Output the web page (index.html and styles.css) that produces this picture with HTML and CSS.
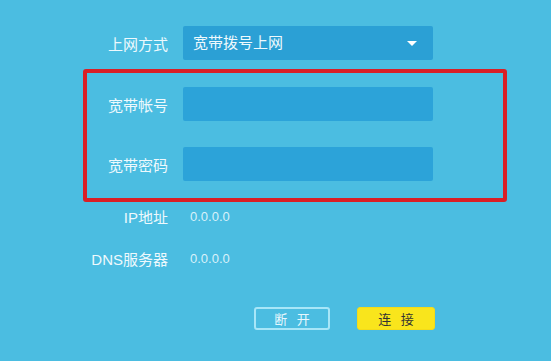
FILE: index.html
```html
<!DOCTYPE html>
<html lang="zh-CN">

<head>
    <meta charset="UTF-8">
    <title>上网设置</title>
    <link rel="stylesheet" href="styles.css">
</head>

<body>
    <div class="wan_form">
        <div class="row">
            <div class="row_label">上网方式</div>
            <div class="select_box">
                <span>宽带拨号上网</span>
                <i class="arrow"></i>
            </div>
        </div>

        <div class="pppoe_box">
            <div class="row">
                <div class="row_label">宽带帐号</div>
                <input type="text" class="field">
            </div>
            <div class="row row_pwd">
                <div class="row_label">宽带密码</div>
                <input type="password" class="field">
            </div>
        </div>

        <div class="row info_row">
            <div class="row_label">IP地址</div>
            <div class="info_val">0.0.0.0</div>
        </div>
        <div class="row info_row dns_row">
            <div class="row_label">DNS服务器</div>
            <div class="info_val">0.0.0.0</div>
        </div>

        <div class="actions">
            <button class="btn btn_off">断 开</button>
            <button class="btn btn_on">连 接</button>
        </div>
    </div>
</body>

</html>
```

FILE: styles.css
```css
* {
    margin: 0;
    padding: 0;
    box-sizing: border-box;
}

body {
    width: 551px;
    height: 361px;
    background: #4bbde1;
    font-family: "Liberation Sans", "Noto Sans CJK SC", sans-serif;
    color: #eef9fd;
    overflow: hidden;
}

.wan_form {
    padding-top: 26px;
    padding-left: 88px;
}

.row {
    display: flex;
    align-items: center;
}

.row_label {
    width: 80px;
    margin-right: 15px;
    text-align: right;
    font-size: 15px;
    white-space: nowrap;
}

.select_box {
    position: relative;
    width: 250px;
    height: 34px;
    line-height: 34px;
    padding-left: 10px;
    background: #2ba0d5;
    border-radius: 2px;
    font-size: 15px;
}

.arrow {
    position: absolute;
    right: 16px;
    top: 15px;
    border-left: 5px solid transparent;
    border-right: 5px solid transparent;
    border-top: 5px solid #ffffff;
}

.pppoe_box {
    width: 424px;
    height: 133px;
    margin-top: 9px;
    margin-left: -5px;
    padding-top: 14px;
    padding-left: 1px;
    border: 4px solid #d91f26;
    border-radius: 3px;
}

.field {
    width: 250px;
    height: 34px;
    border: 0;
    border-radius: 2px;
    background: #2ca3d9;
    outline: none;
}

.row_pwd {
    margin-top: 26px;
}

.info_row {
    height: 26px;
    margin-top: 1px;
}

.dns_row {
    margin-top: 16px;
}

.info_val {
    padding-left: 7px;
    font-size: 13px;
    color: #d9f1fa;
}

.actions {
    display: flex;
    gap: 27px;
    margin-top: 36px;
    padding-left: 166px;
}

.btn {
    height: 23px;
    border-radius: 3px;
    font-family: "Liberation Sans", "Noto Sans CJK SC", sans-serif;
    font-size: 13px;
    letter-spacing: 3px;
    text-indent: 3px;
}

.btn_off {
    width: 76px;
    background: transparent;
    border: 2px solid #a7e6f8;
    color: #e6f7fd;
}

.btn_on {
    width: 78px;
    background: #f9e51c;
    border: 1px solid #f4dc18;
    color: #333333;
}
```
